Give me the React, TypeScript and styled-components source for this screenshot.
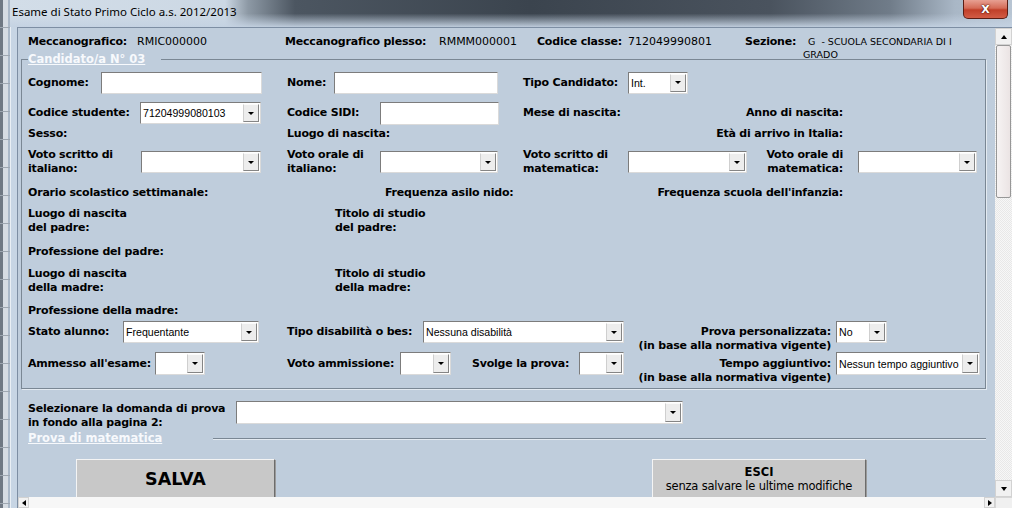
import React from 'react';
import styled, { createGlobalStyle } from 'styled-components';

const GlobalStyle = createGlobalStyle`
  html, body {
    margin: 0;
    padding: 0;
    width: 1012px;
    height: 508px;
    overflow: hidden;
  }
  body {
    font-family: "DejaVu Sans", Verdana, sans-serif;
    font-size: 11px;
    color: #000;
  }
`;

const Screen = styled.div`
  display: flex;
  width: 1012px;
  height: 508px;
  overflow: hidden;
`;

// bit of the spreadsheet window peeking out on the left
const Backdrop = styled.div`
  flex: none;
  width: 10px;
  background:
    repeating-linear-gradient(to bottom, transparent 0 27px, #9ea7b1 27px 28px),
    linear-gradient(to right, #6f7883 0 3px, #d6dce3 3px 8px, #aab8c8 8px 10px);
`;

const Window = styled.div`
  flex: 1;
  min-width: 0;
  display: flex;
  flex-direction: column;
`;

const TitleBar = styled.div`
  flex: none;
  height: 27px;
  display: flex;
  align-items: flex-start;
  background:
    linear-gradient(to bottom, rgba(200, 214, 229, 0) 50%, rgba(196, 210, 226, 0.95) 100%),
    linear-gradient(to right, #d2dde8 0, #ccd8e4 215px, #8d99a5 238px, #4c5661 285px,
      #3b444e 520px, #4a535e 760px, #707c89 880px, #a9b7c6 945px, #b8c5d3 1002px);
`;

const Title = styled.div`
  padding: 4px 0 0 2px;
  font-family: "Noto Sans", "Open Sans", sans-serif;
  font-size: 11.5px;
  line-height: 16px;
  color: #000;
  white-space: nowrap;
`;

const CloseButton = styled.div`
  margin-left: auto;
  margin-right: 4px;
  width: 45px;
  height: 19px;
  box-sizing: border-box;
  border: 1px solid #5b1d14;
  border-top: none;
  border-radius: 0 0 5px 5px;
  background: linear-gradient(to bottom, #e7a092 0%, #d56b57 45%, #c13f29 55%, #d25c45 100%);
  display: flex;
  align-items: center;
  justify-content: center;
  color: #fff;
  font-family: "DejaVu Sans", sans-serif;
  font-weight: bold;
  font-size: 11px;
  text-shadow: 0 0 2px #4a0f08, 0 0 1px #4a0f08;
`;

const WindowBody = styled.div`
  flex: 1;
  min-height: 0;
  display: flex;
`;

const FrameEdge = styled.div`
  flex: none;
  width: 6px;
  background: #c7d5e4;
  border-left: 1px solid #e9eff5;
`;

const Client = styled.div`
  flex: 1;
  min-width: 0;
  display: flex;
  flex-direction: column;
  border-top: 1px solid #7d8ea3;
  border-left: 1px solid #7d8ea3;
`;

const ViewRow = styled.div`
  flex: 1;
  min-height: 0;
  display: flex;
`;

const Viewport = styled.div`
  flex: 1;
  min-width: 0;
  overflow: hidden;
  background: #bfcddc;
  padding-top: 7px;
`;

const HeaderRow = styled.div`
  display: flex;
  height: 13px;
  padding-left: 10px;
  line-height: 13px;
`;

const HeaderCell = styled.div<{ $w?: number }>`
  flex: none;
  display: flex;
  width: ${(p) => (p.$w ? `${p.$w}px` : 'auto')};
`;

const HeaderLabel = styled.span<{ $w: number }>`
  flex: none;
  width: ${(p) => p.$w}px;
  font-weight: bold;
  letter-spacing: -0.2px;
  white-space: nowrap;
`;

const HeaderValue = styled.span`
  white-space: nowrap;
`;

const SectionValue = styled.span`
  font-size: 9.5px;
  line-height: 13px;
  text-indent: 5px;
  white-space: nowrap;
`;

const Frame = styled.fieldset`
  margin: 4px 9px 0 3px;
  padding: 0 0 0 6px;
  border: 1px solid #7a8794;
  box-shadow: 1px 1px 0 #e3eaf1;
  min-width: 0;
`;

const Legend = styled.legend`
  padding: 0 16px 0 0;
  margin-left: 0;
  font-size: 11.5px;
  line-height: 15px;
  font-weight: bold;
  color: #f7f9fc;
  text-decoration: underline;
`;

const Row = styled.div<{ $h: number }>`
  display: flex;
  align-items: center;
  height: ${(p) => p.$h}px;
`;

const Cell = styled.div<{ $w?: number; $justify?: string }>`
  flex: none;
  display: flex;
  align-items: center;
  justify-content: ${(p) => p.$justify ?? 'flex-start'};
  width: ${(p) => (p.$w ? `${p.$w}px` : 'auto')};
`;

const Label = styled.div<{ $w?: number; $right?: boolean; $anchor?: boolean }>`
  flex: none;
  width: ${(p) => (p.$w ? `${p.$w}px` : 'auto')};
  height: ${(p) => (p.$anchor ? '14px' : 'auto')};
  text-align: ${(p) => (p.$right ? 'right' : 'left')};
  font-weight: bold;
  letter-spacing: -0.2px;
  line-height: 14px;
  white-space: nowrap;
`;

const Control = styled.div<{ $w: number; $h?: number; $ml?: number }>`
  flex: none;
  box-sizing: border-box;
  width: ${(p) => p.$w}px;
  height: ${(p) => p.$h ?? 22}px;
  margin-left: ${(p) => p.$ml ?? 0}px;
  display: flex;
  align-items: stretch;
  background: #fff;
  border: 1px solid;
  border-color: #7c7c7c #dadada #dadada #7c7c7c;
  font-family: "Liberation Sans", Arial, sans-serif;
  font-size: 10.6px;
  letter-spacing: 0;
  font-weight: normal;
`;

const ControlText = styled.span`
  flex: 1;
  min-width: 0;
  padding-left: 2px;
  display: flex;
  align-items: center;
  white-space: nowrap;
  overflow: hidden;
`;

const DropButton = styled.span`
  flex: none;
  width: 16px;
  margin: 1px;
  box-sizing: border-box;
  background: #ededed;
  border: 1px solid;
  border-color: #fbfbfb #858585 #858585 #cfcfcf;
  display: flex;
  align-items: center;
  justify-content: center;

  &::after {
    content: "";
    border-left: 3px solid transparent;
    border-right: 3px solid transparent;
    border-top: 3px solid #000;
  }
`;

const QuestionRow = styled.div`
  display: flex;
  align-items: flex-start;
  height: 23px;
  margin-top: 12px;
  padding-left: 10px;
`;

const QuestionLabel = styled(Label)`
  margin-top: 1px;
`;

const SectionHeader = styled.div`
  display: flex;
  align-items: center;
  height: 15px;
  margin-top: 7px;
  padding-left: 10px;
`;

const SectionTitle = styled.span`
  font-size: 11.5px;
  line-height: 15px;
  font-weight: bold;
  color: #f7f9fc;
  text-decoration: underline;
  white-space: nowrap;
`;

const Rule = styled.div`
  margin-left: auto;
  margin-right: 9px;
  width: 773px;
  border-top: 1px solid #7a8794;
  border-bottom: 1px solid #e3eaf1;
`;

const ButtonRow = styled.div`
  display: flex;
  margin-top: 13px;
  padding-left: 10px;
`;

const ActionButton = styled.div<{ $w: number; $ml: number }>`
  flex: none;
  box-sizing: border-box;
  width: ${(p) => p.$w}px;
  height: 40px;
  margin-left: ${(p) => p.$ml}px;
  background: #c8c8c8;
  border: 1px solid;
  border-color: #f4f4f4 #6c6c6c #6c6c6c #f4f4f4;
  box-shadow: 1px 1px 0 #9a9a9a;
  display: flex;
  flex-direction: column;
  align-items: center;
  justify-content: center;
  color: #000;
`;

const BigCaption = styled.span`
  font-size: 17.5px;
  font-weight: bold;
`;

const SmallCaption = styled.span<{ $bold?: boolean }>`
  font-size: ${(p) => (p.$bold ? '11.5px' : '11.5px')};
  font-weight: ${(p) => (p.$bold ? 'bold' : 'normal')};
  letter-spacing: ${(p) => (p.$bold ? '0' : '-0.2px')};
  line-height: 14px;
  white-space: nowrap;
`;

const VScroll = styled.div`
  flex: none;
  width: 17px;
  display: flex;
  flex-direction: column;
  background: repeating-conic-gradient(#e8e8e8 0 25%, #f7f7f7 0 50%) 0 0 / 2px 2px;
`;

const ScrollArrow = styled.div<{ $dir: 'up' | 'down' | 'left' | 'right'; $size?: number }>`
  flex: none;
  box-sizing: border-box;
  width: ${(p) => p.$size ?? 17}px;
  height: ${(p) => (p.$dir === 'up' || p.$dir === 'down' ? 17 : 11)}px;
  margin-top: ${(p) => (p.$dir === 'down' ? 'auto' : '0')};
  background: #f1f1f1;
  border: 1px solid #d2d2d2;
  display: flex;
  align-items: ${(p) => (p.$dir === 'left' || p.$dir === 'right' ? 'flex-end' : 'center')};
  padding-bottom: ${(p) => (p.$dir === 'left' || p.$dir === 'right' ? '1px' : '0')};
  justify-content: center;

  &::after {
    content: "";
    ${(p) =>
      p.$dir === 'up'
        ? 'border-left: 3.5px solid transparent; border-right: 3.5px solid transparent; border-bottom: 4px solid #000;'
        : p.$dir === 'down'
          ? 'border-left: 3.5px solid transparent; border-right: 3.5px solid transparent; border-top: 4px solid #000;'
          : p.$dir === 'left'
            ? 'border-top: 3.5px solid transparent; border-bottom: 3.5px solid transparent; border-right: 4px solid #000;'
            : 'border-top: 3.5px solid transparent; border-bottom: 3.5px solid transparent; border-left: 4px solid #000;'}
  }
`;

const Thumb = styled.div`
  flex: none;
  height: 153px;
  margin: 0 1px;
  box-sizing: border-box;
  border: 1px solid #979797;
  border-radius: 2px;
  background: linear-gradient(to right, #f6f3f3, #ebe4e4);
`;

const HScroll = styled.div`
  flex: none;
  height: 11px;
  display: flex;
  background: #f7f7f7;
`;

const HTrack = styled.div`
  flex: 1;
  display: flex;
  justify-content: space-between;
`;

const Corner = styled.div`
  flex: none;
  width: 17px;
  box-sizing: border-box;
  background: #f0f0f0;
  border-left: 1px solid #d6d6d6;
  border-top: 1px solid #d6d6d6;
`;

type SelectProps = { w: number; h?: number; ml?: number; value?: string };

const Select = ({ w, h, ml, value = '' }: SelectProps) => (
  <Control $w={w} $h={h} $ml={ml}>
    <ControlText>{value}</ControlText>
    <DropButton />
  </Control>
);

const Input = ({ w, h }: { w: number; h?: number }) => <Control $w={w} $h={h} />;

export default function App() {
  return (
    <>
      <GlobalStyle />
      <Screen>
        <Backdrop />
        <Window>
          <TitleBar>
            <Title>Esame di Stato Primo Ciclo a.s. 2012/2013</Title>
            <CloseButton>X</CloseButton>
          </TitleBar>
          <WindowBody>
            <FrameEdge />
            <Client>
              <ViewRow>
                <Viewport>
                  <HeaderRow>
                    <HeaderCell $w={257}>
                      <HeaderLabel $w={109}>Meccanografico:</HeaderLabel>
                      <HeaderValue>RMIC000000</HeaderValue>
                    </HeaderCell>
                    <HeaderCell $w={252}>
                      <HeaderLabel $w={154}>Meccanografico plesso:</HeaderLabel>
                      <HeaderValue>RMMM000001</HeaderValue>
                    </HeaderCell>
                    <HeaderCell $w={208}>
                      <HeaderLabel $w={91}>Codice classe:</HeaderLabel>
                      <HeaderValue>712049990801</HeaderValue>
                    </HeaderCell>
                    <HeaderCell>
                      <HeaderLabel $w={58}>Sezione:</HeaderLabel>
                      <SectionValue>
                        G&nbsp; - SCUOLA SECONDARIA DI I<br />GRADO
                      </SectionValue>
                    </HeaderCell>
                  </HeaderRow>

                  <Frame>
                    <Legend>Candidato/a N° 03</Legend>

                    <Row $h={31}>
                      <Cell $w={259}>
                        <Label $w={73}>Cognome:</Label>
                        <Input w={161} />
                      </Cell>
                      <Cell $w={236}>
                        <Label $w={47}>Nome:</Label>
                        <Input w={164} />
                      </Cell>
                      <Cell>
                        <Label $w={105}>Tipo Candidato:</Label>
                        <Select w={60} value="Int." />
                      </Cell>
                    </Row>

                    <Row $h={30}>
                      <Cell $w={259}>
                        <Label $w={112}>Codice studente:</Label>
                        <Select w={121} value="71204999080103" />
                      </Cell>
                      <Cell $w={236}>
                        <Label $w={93}>Codice SIDI:</Label>
                        <Input w={119} h={23} />
                      </Cell>
                      <Cell $w={320} $justify="space-between">
                        <Label>Mese di nascita:</Label>
                        <Label>Anno di nascita:</Label>
                      </Cell>
                    </Row>

                    <Row $h={12}>
                      <Cell $w={259}>
                        <Label>Sesso:</Label>
                      </Cell>
                      <Cell $w={236}>
                        <Label>Luogo di nascita:</Label>
                      </Cell>
                      <Cell $w={320} $justify="flex-end">
                        <Label>Età di arrivo in Italia:</Label>
                      </Cell>
                    </Row>

                    <Row $h={44}>
                      <Cell $w={259}>
                        <Label $w={113}>
                          Voto scritto di
                          <br />
                          italiano:
                        </Label>
                        <Select w={120} />
                      </Cell>
                      <Cell $w={236}>
                        <Label $w={93}>
                          Voto orale di
                          <br />
                          italiano:
                        </Label>
                        <Select w={118} />
                      </Cell>
                      <Cell>
                        <Label $w={105}>
                          Voto scritto di
                          <br />
                          matematica:
                        </Label>
                        <Select w={119} />
                        <Label $w={96} $right>
                          Voto orale di
                          <br />
                          matematica:
                        </Label>
                        <Select w={119} ml={15} />
                      </Cell>
                    </Row>

                    <Row $h={18}>
                      <Cell $w={357}>
                        <Label>Orario scolastico settimanale:</Label>
                      </Cell>
                      <Cell $w={458} $justify="space-between">
                        <Label>Frequenza asilo nido:</Label>
                        <Label>Frequenza scuola dell'infanzia:</Label>
                      </Cell>
                    </Row>

                    <Row $h={38}>
                      <Cell $w={307}>
                        <Label>
                          Luogo di nascita
                          <br />
                          del padre:
                        </Label>
                      </Cell>
                      <Cell>
                        <Label>
                          Titolo di studio
                          <br />
                          del padre:
                        </Label>
                      </Cell>
                    </Row>

                    <Row $h={24}>
                      <Label>Professione del padre:</Label>
                    </Row>

                    <Row $h={33}>
                      <Cell $w={307}>
                        <Label>
                          Luogo di nascita
                          <br />
                          della madre:
                        </Label>
                      </Cell>
                      <Cell>
                        <Label>
                          Titolo di studio
                          <br />
                          della madre:
                        </Label>
                      </Cell>
                    </Row>

                    <Row $h={28}>
                      <Label>Professione della madre:</Label>
                    </Row>

                    <Row $h={14}>
                      <Cell $w={259}>
                        <Label $w={95}>Stato alunno:</Label>
                        <Select w={136} value="Frequentante" />
                      </Cell>
                      <Cell $w={337}>
                        <Label $w={136}>Tipo disabilità o bes:</Label>
                        <Select w={201} value="Nessuna disabilità" />
                      </Cell>
                      <Label $w={207} $right $anchor>
                        Prova personalizzata:
                        <br />
                        (in base alla normativa vigente)
                      </Label>
                      <Select w={51} ml={5} value="No" />
                    </Row>

                    <Row $h={49}>
                      <Cell $w={259}>
                        <Label $w={127}>Ammesso all'esame:</Label>
                        <Select w={50} h={23} />
                      </Cell>
                      <Cell $w={185}>
                        <Label $w={113}>Voto ammissione:</Label>
                        <Select w={51} h={23} />
                      </Cell>
                      <Cell $w={152}>
                        <Label $w={107}>Svolge la prova:</Label>
                        <Select w={45} h={23} />
                      </Cell>
                      <Label $w={207} $right $anchor>
                        Tempo aggiuntivo:
                        <br />
                        (in base alla normativa vigente)
                      </Label>
                      <Select w={144} h={23} ml={5} value="Nessun tempo aggiuntivo" />
                    </Row>
                  </Frame>

                  <QuestionRow>
                    <QuestionLabel $w={208}>
                      Selezionare la domanda di prova
                      <br />
                      in fondo alla pagina 2:
                    </QuestionLabel>
                    <Select w={447} h={23} />
                  </QuestionRow>

                  <SectionHeader>
                    <SectionTitle>Prova di matematica</SectionTitle>
                    <Rule />
                  </SectionHeader>

                  <ButtonRow>
                    <ActionButton $w={199} $ml={48}>
                      <BigCaption>SALVA</BigCaption>
                    </ActionButton>
                    <ActionButton $w={214} $ml={377}>
                      <SmallCaption $bold>ESCI</SmallCaption>
                      <SmallCaption>senza salvare le ultime modifiche</SmallCaption>
                    </ActionButton>
                  </ButtonRow>
                </Viewport>

                <VScroll>
                  <ScrollArrow $dir="up" />
                  <Thumb />
                  <ScrollArrow $dir="down" />
                </VScroll>
              </ViewRow>

              <HScroll>
                <HTrack>
                  <ScrollArrow $dir="left" $size={11} />
                  <ScrollArrow $dir="right" $size={11} />
                </HTrack>
                <Corner />
              </HScroll>
            </Client>
          </WindowBody>
        </Window>
      </Screen>
    </>
  );
}
